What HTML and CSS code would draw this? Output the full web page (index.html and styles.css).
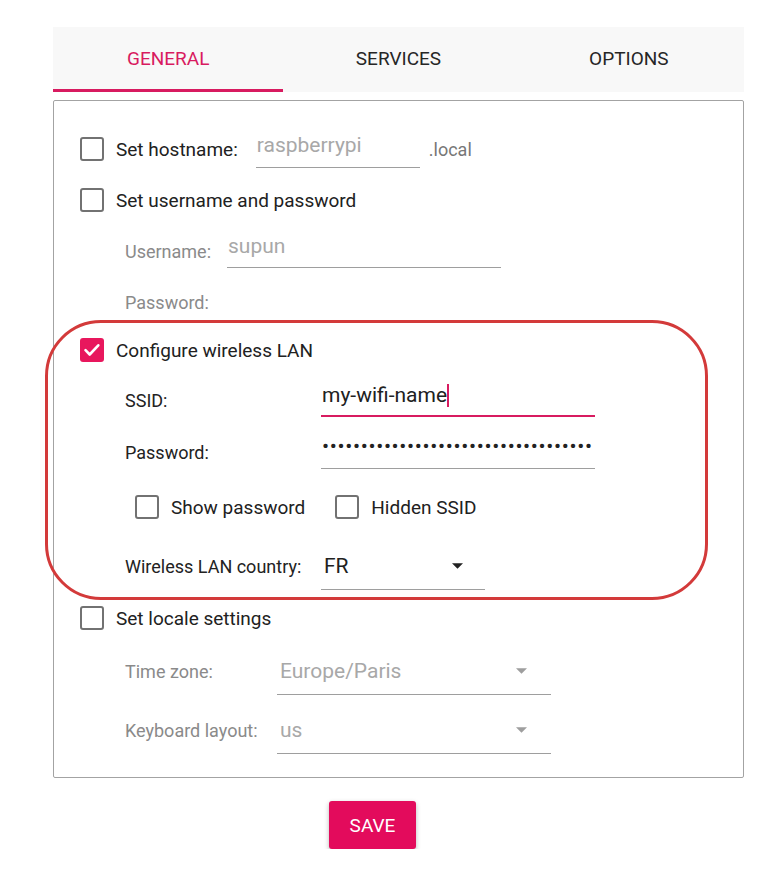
FILE: index.html
```html
<!DOCTYPE html>
<html>
<head>
<meta charset="utf-8">
<link rel="stylesheet" href="styles.css">
</head>
<body>
<div class="app">
  <div class="tabs">
    <div class="tab active">General</div>
    <div class="tab">Services</div>
    <div class="tab">Options</div>
  </div>
  <div class="panel">
    <div class="row row-host">
      <span class="cb"></span>
      <span class="cb-label">Set hostname:</span>
      <span class="field field-host ph">raspberrypi</span>
      <span class="suffix">.local</span>
    </div>
    <div class="row row-user">
      <span class="cb"></span>
      <span class="cb-label">Set username and password</span>
    </div>
    <div class="row sub row-uname">
      <span class="sub-label muted w-user">Username:</span>
      <span class="field field-wide ph">supun</span>
    </div>
    <div class="row sub row-upass">
      <span class="sub-label muted">Password:</span>
    </div>
    <div class="row row-wifi">
      <span class="cb checked"><svg viewBox="0 0 24 24" width="24" height="24"><path d="M5.5 12.2l4.2 4.3 8.6-9.2" fill="none" stroke="#fff" stroke-width="2.6" stroke-linecap="round" stroke-linejoin="round"/></svg></span>
      <span class="cb-label">Configure wireless LAN</span>
    </div>
    <div class="row sub row-ssid">
      <span class="sub-label w-wifi">SSID:</span>
      <span class="field field-wide focused">my-wifi-name<span class="caret"></span></span>
    </div>
    <div class="row sub row-wpass">
      <span class="sub-label w-wifi">Password:</span>
      <span class="field field-wide dots">•••••••••••••••••••••••••••••••••••</span>
    </div>
    <div class="row sub2 row-opts">
      <span class="cb"></span>
      <span class="cb-label">Show password</span>
      <span class="cb gap-cb"></span>
      <span class="cb-label">Hidden SSID</span>
    </div>
    <div class="row sub row-country">
      <span class="sub-label w-wifi">Wireless LAN country:</span>
      <span class="select select-country">
        <span class="select-value">FR</span>
        <svg class="arrow" viewBox="0 0 10 5" width="11" height="6"><path d="M0 0h10L5 5z" fill="#222"/></svg>
      </span>
    </div>
    <div class="row row-locale">
      <span class="cb"></span>
      <span class="cb-label">Set locale settings</span>
    </div>
    <div class="row sub row-tz">
      <span class="sub-label muted w-locale">Time zone:</span>
      <span class="select select-wide disabled">
        <span class="select-value">Europe/Paris</span>
        <svg class="arrow" viewBox="0 0 10 5" width="11" height="6"><path d="M0 0h10L5 5z" fill="#9e9e9e"/></svg>
      </span>
    </div>
    <div class="row sub row-kb">
      <span class="sub-label muted w-locale">Keyboard layout:</span>
      <span class="select select-wide disabled">
        <span class="select-value">us</span>
        <svg class="arrow" viewBox="0 0 10 5" width="11" height="6"><path d="M0 0h10L5 5z" fill="#9e9e9e"/></svg>
      </span>
    </div>
    <div class="highlight"></div>
  </div>
  <div class="actions">
    <button class="save">Save</button>
  </div>
</div>
</body>
</html>
```

FILE: styles.css
```css
html, body {
  margin: 0;
  background: #ffffff;
}
body {
  font-family: Roboto, "Noto Sans", sans-serif;
  color: #212121;
}
.app {
  width: 691px;
  margin: 27px 0 0 53px;
}
.tabs {
  display: flex;
  height: 65px;
  background: #f8f8f8;
}
.tab {
  flex: 1;
  display: flex;
  align-items: center;
  justify-content: center;
  padding-top: 1px;
  font-size: 19px;
  text-transform: uppercase;
  color: #262626;
  border-bottom: 3px solid transparent;
}
.tab.active {
  color: #d81b60;
  border-bottom-color: #d81b60;
}
.panel {
  position: relative;
  margin-top: 8px;
  border: 1px solid #a3a3a3;
  border-radius: 2px;
  padding: 23px 0 22px 26px;
}
.row {
  display: flex;
  align-items: center;
  height: 50px;
}
.sub { padding-left: 45px; }
.sub2 { padding-left: 55px; }
.row-user, .row-uname, .row-upass { margin-top: 1px; }
.row-wifi { margin-top: -2px; }
.row-wpass { margin-top: 2px; }
.row-opts { margin-top: 5px; }
.row-country { margin-top: 9px; }
.row-locale { margin-top: 2px; }
.row-tz { margin-top: 3px; }
.row-kb { margin-top: 9px; }

.cb {
  flex: none;
  width: 24px;
  height: 24px;
  box-sizing: border-box;
  border: 2px solid #727272;
  border-radius: 3px;
  margin-right: 12px;
  display: flex;
}
.cb.checked {
  background: #e8175d;
  border: none;
}
.gap-cb { margin-left: 30px; }
.cb-label {
  font-size: 19px;
  color: #212121;
}
.sub-label {
  flex: none;
  font-size: 18px;
  color: #222;
}
.muted { color: #8a8a8a; }
.w-user { width: 102px; }
.w-wifi { width: 196px; }
.w-locale { width: 152px; }

.field {
  box-sizing: border-box;
  height: 34px;
  line-height: 24px;
  font-size: 21px;
  border-bottom: 1px solid #9e9e9e;
  padding-left: 1px;
  color: #212121;
  white-space: nowrap;
  overflow: hidden;
}
.field-host {
  width: 164px;
  height: 38px;
  line-height: 30px;
  margin-left: 18px;
}
.field-wide { width: 274px; }
.ph { color: #a8a8a8; }
.focused {
  border-bottom: 2px solid #d81b60;
  display: flex;
  align-items: flex-start;
}
.caret {
  display: inline-block;
  width: 2px;
  height: 23px;
  margin-top: 1px;
  background: #d81b60;
}
.dots {
  font-size: 21px;
  letter-spacing: 0.65px;
  line-height: 22px;
  color: #222;
}
.suffix {
  margin-left: 9px;
  font-size: 18px;
  color: #777;
}
.select {
  box-sizing: border-box;
  height: 48px;
  padding: 0 22px 0 3px;
  display: flex;
  align-items: center;
  justify-content: space-between;
  border-bottom: 1px solid #9e9e9e;
  font-size: 21px;
  color: #212121;
}
.select-country { width: 164px; }
.select-wide { width: 274px; padding-right: 24px; }
.disabled { color: #a8a8a8; }
.select-value { line-height: 24px; }

.highlight {
  position: absolute;
  left: -9px;
  top: 219px;
  width: 663px;
  height: 280px;
  box-sizing: border-box;
  border: 3px solid #d33a3a;
  border-radius: 56px;
  pointer-events: none;
}
.actions {
  display: flex;
  margin-top: 23px;
  padding-left: 276px;
}
.save {
  width: 87px;
  height: 48px;
  border: none;
  border-radius: 3px;
  background: #e30b5c;
  color: #fff;
  font-family: Roboto, sans-serif;
  font-size: 19px;
  text-transform: uppercase;
  box-shadow: 0 2px 5px rgba(0,0,0,0.28);
  padding: 0;
}
```
